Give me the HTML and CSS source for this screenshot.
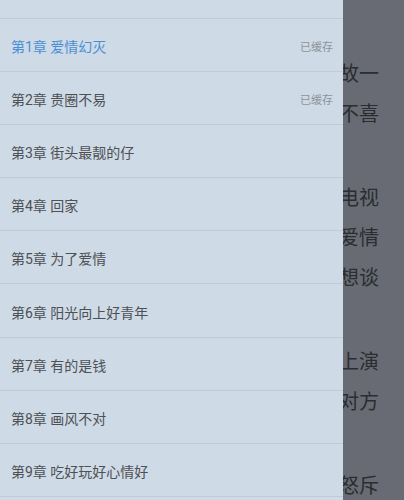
FILE: index.html
```html
<!DOCTYPE html>
<html lang="zh-CN">
<head>
<meta charset="utf-8">
<link rel="stylesheet" href="styles.css">
</head>
<body>
<div class="reader">
  <nav class="drawer">
    <div class="top-space"></div>
    <ul class="chapters">
      <li class="chapter current"><span class="title">第1章 爱情幻灭</span><span class="cached">已缓存</span></li>
      <li class="chapter"><span class="title">第2章 贵圈不易</span><span class="cached">已缓存</span></li>
      <li class="chapter"><span class="title">第3章 街头最靓的仔</span></li>
      <li class="chapter"><span class="title">第4章 回家</span></li>
      <li class="chapter"><span class="title">第5章 为了爱情</span></li>
      <li class="chapter"><span class="title">第6章 阳光向上好青年</span></li>
      <li class="chapter"><span class="title">第7章 有的是钱</span></li>
      <li class="chapter"><span class="title">第8章 画风不对</span></li>
      <li class="chapter"><span class="title">第9章 吃好玩好心情好</span></li>
      <li class="chapter"><span class="title">第10章 新的开始</span></li>
    </ul>
  </nav>
  <div class="page">
    <p class="para"><span class="line">自从那天以后，他再也没有提起过那段往事，故一</span><span class="line">直以为她早已忘记，可她心里始终有些不喜</span></p>
    <p class="para"><span class="line">那天晚上，两个人坐在沙发上一起看着电视</span><span class="line">里正在播放的节目，讲的是一段关于爱情</span><span class="line">的故事，她忽然转过头来说她很想谈</span></p>
    <p class="para"><span class="line">一场真正的恋爱，就像电视剧里正在上演</span><span class="line">的那样，可是他却没有回答对方</span></p>
    <p class="para"><span class="line">第二天一早，她就被母亲狠狠地怒斥</span></p>
  </div>
</div>
</body>
</html>
```
FILE: styles.css
```css
html, body {
  margin: 0;
  padding: 0;
}
body {
  width: 404px;
  height: 500px;
  overflow: hidden;
  font-family: Roboto, "Noto Sans CJK SC", sans-serif;
}
.reader {
  display: flex;
  width: 404px;
  height: 500px;
  overflow: hidden;
  background: #686b73;
}
.drawer {
  flex: 0 0 343px;
  width: 343px;
  height: 500px;
  overflow: hidden;
  background: #cedae5;
}
.top-space {
  height: 19px;
  border-bottom: 1px solid #bfcbd6;
  box-sizing: border-box;
}
.chapters {
  list-style: none;
  margin: 0;
  padding: 0;
}
.chapter {
  height: 53.1px;
  box-sizing: border-box;
  border-bottom: 1px solid #bfcbd6;
  display: flex;
  align-items: center;
  justify-content: space-between;
  padding: 2px 10px 0 11px;
}
.title {
  font-size: 14px;
  color: #4d5055;
  white-space: nowrap;
}
.current .title {
  color: #4a8fd6;
}
.cached {
  font-size: 11px;
  color: #8d939a;
}
.page {
  flex: 1 1 auto;
  min-width: 0;
  overflow: hidden;
  display: flex;
  flex-direction: column;
  align-items: flex-end;
  padding: 53px 25px 0 0;
  font-family: "Noto Sans CJK SC", sans-serif;
  font-size: 20px;
  line-height: 40px;
  color: #2b2d31;
}
.para {
  margin: 0 0 44px 0;
  display: flex;
  flex-direction: column;
  align-items: flex-end;
}
.line {
  display: block;
  white-space: nowrap;
}
```
